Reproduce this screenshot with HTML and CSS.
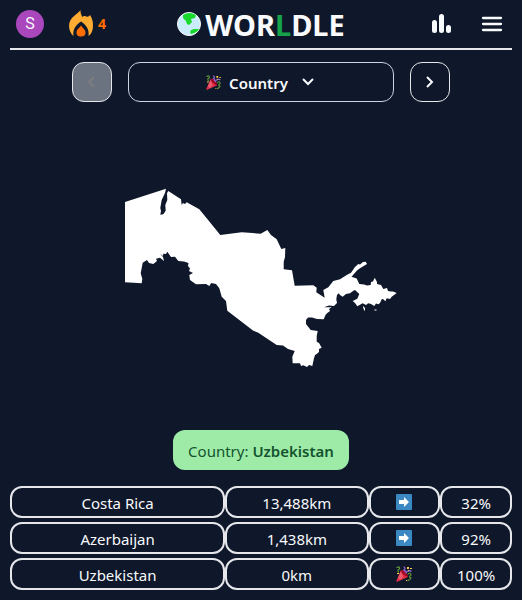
FILE: index.html
```html
<!DOCTYPE html>
<html lang="en">
<head>
<meta charset="utf-8">
<meta name="viewport" content="width=device-width, initial-scale=1">
<title>Worldle</title>
<link rel="stylesheet" href="styles.css">
</head>
<body>
<svg class="defs" aria-hidden="true">
  <symbol id="party" viewBox="0 0 16 16">
    <path fill="#dd2e44" d="M5 4 0.3 14.8Q0 16 1.3 15.7L12 11Q10 6 5 4Z"/>
    <path fill="#ea596e" d="M5 5 2 12 4 14 7 11Z"/>
    <path fill="#a0041e" d="M5 4Q9 4 11 8 12 10 12 11 9 10 7 8 5 6 5 4Z"/>
    <g fill="none" stroke-width="1.3" stroke-linecap="round">
      <path stroke="#5c913b" d="M1 1.5Q4 0 3.5 3 1 4 2.5 6M12 8Q15 6 15 9 12 11 15 12 14 14 12 14.500"/>
      <path stroke="#9266cc" d="M8 1Q10 2 8 4 10 4 9 6M10 7Q11 4 15 5"/>
    </g>
    <path fill="#ffcc4d" d="M11 1h2v2h-2zM14 2h2v1h-2zM12 4h1v1h-1zM1 7h2v1H1zM10 14h1v1h-1z"/>
  </symbol>
  <symbol id="arrow" viewBox="0 0 16 16">
    <rect width="16" height="16" rx="1" fill="#3b88c3"/>
    <path fill="#fff" d="M3 6h5V3l5 5-5 5v-3H3z"/>
  </symbol>
</svg>
<header class="header">
  <div class="side">
    <button class="avatar" aria-label="Account">S</button>
    <div class="streak">
      <svg width="24" height="28" viewBox="0 0 24 28" aria-hidden="true">
        <path fill="#ffac33" d="M11.500 0C9 4 0 7 0 16c0 4 2 8 4.500 10C3.500 19 7 15 12 11.500c5 3.500 8.500 7.500 7.500 14.500 3-2 4.500-6 4.500-10 0-5-1-8-3-11-1 2-3 2-5 1-1 0-2 0-3 1 0-2-2-4-1.500-7Z"/>
        <path fill="#ff6c00" d="M12 15.500c-2 3-4.500 4-4.500 7s2 4 4.500 4 4.500-1 4.500-4-2.500-4-4.500-7Z"/>
      </svg>
      <span>4</span>
    </div>
  </div>
  <h1 class="title">
    <svg width="24" height="24" viewBox="0 0 24 24" aria-hidden="true">
      <circle cx="12" cy="12" r="11.500" fill="#c9edff" stroke="#f8fafc"/>
      <path fill="#18d92c" d="M6 3Q12-1 19 3l-1 3-4 1 1 3-3 3-2-1-1-3-3-3ZM14 18l3-1h5q-2 4-8 5l-1-2Z"/>
    </svg>
    <span>WOR<span class="green">L</span>DLE</span>
  </h1>
  <div class="side end">
    <button class="icon" aria-label="Statistics">
      <svg width="20" height="20" viewBox="0 0 20 20" fill="currentColor" aria-hidden="true"><rect y="6" width="5" height="13" rx="2.500"/><rect x="7" width="5" height="19" rx="2.500"/><rect x="14" y="11" width="5" height="8" rx="2.500"/></svg>
    </button>
    <button class="icon" aria-label="Menu">
      <svg width="22" height="16" viewBox="0 0 22 16" stroke="currentColor" stroke-width="2.300" stroke-linecap="round" aria-hidden="true"><path d="M2 2h18M2 8h18M2 14h18"/></svg>
    </button>
  </div>
</header>
<main>
  <nav class="rounds" aria-label="Rounds">
    <button class="step" aria-label="Previous round" disabled>
      <svg class="line" width="16" height="16" viewBox="0 0 16 16" aria-hidden="true"><path d="m10 3-5 5 5 5"/></svg>
    </button>
    <button class="picker">
      <svg width="15" height="15" aria-hidden="true"><use href="#party"/></svg>
      <span>Country</span>
      <svg class="line chevron" width="16" height="16" viewBox="0 0 16 16" aria-hidden="true"><path d="m3 5 5 5 5-5"/></svg>
    </button>
    <button class="step" aria-label="Next round">
      <svg class="line" width="16" height="16" viewBox="0 0 16 16" aria-hidden="true"><path d="m5 3 5 5-5 5"/></svg>
    </button>
  </nav>
  <div class="map">
    <svg width="274" height="180" viewBox="124 188 274 180" fill="#fff" role="img" aria-label="Country outline">
      <path d="M125 202 166 188.700 165 193 161.700 200 160.300 208 161 211 160.300 214.700 163.300 214.300 165.700 210.700 165.300 205 167.300 200 167 193.300 168.300 191 181 199.300 181.700 205 183 203 185 204 186.700 202.300 199.300 209.300 206.700 218.300 220.300 235 241.700 232.300 260.700 233.700 267.300 230 271 235 276.700 239.300 281.300 249 285.300 248 285 257.300 283.700 261.700 283.700 269.300 292 270.300 294.700 285.700 313.300 285.300 316.700 287.700 316.300 292.300 324.700 297.700 324 294 323.300 290 328.300 287.300 333.300 281 340 279.300 346.700 275 351 272.700 355 267 358.300 264 360 264.500 363 262 365.700 261.700 367 264 360 268.300 357 270.500 351.500 276.700 356.700 278.500 359.300 284 364 284.500 367 285.500 370.700 285 371 282 373 281.500 374.700 277.700 377 282 377 284 381 285 383.300 289 387 288 388 291 391 291.500 393 291.500 396.700 293 391.700 296.700 390 299 386.700 298.300 385.300 301.300 383 299 381.700 299.300 380 303 378.300 304.300 376 303.500 374.300 306 371 304 368.300 303.300 366 305 362.700 303.300 357.300 306.300 355 303 352.700 301 357.300 298.700 359.300 294 355 290 353 291 350 293.300 346 294 342.700 296.700 340 295 338.700 293.300 337 295 336.300 299.300 337 303 334 306 329 305.500 324 307.300 331.700 307.300 329 309 330 311 327 313.300 325.500 315 323.700 319.300 317 319 312 317.500 308 317.500 306 320 306 324 310.700 330 317.700 331 316.700 336 316.700 341.700 319 343 321.700 347.700 319 349 319 352 316.700 354 315 355 314 358.300 312.300 366 309 365 307 367 303.300 365.300 301 366 300 363.300 292.700 363.300 292.300 356.700 294.700 351 288 349 283 345.500 276.700 345 258.300 332.700 253.300 330.700 227.300 310.700 226 301 221.700 296.700 219.300 288.300 216 284 211.300 283 209.300 286 206 284 196 284.300 190 280 189.300 275 193 273 189 271 190 268.500 188 266 188.500 263 184 261.500 178.300 261 175 256.700 171 257 167.300 251.700 166 254 163.300 253.700 163 256 160 253.700 163 257 164 261 160 257.700 156 258.700 157 261 153.300 264 149 263 147 260 142.700 262.700 140.700 273.300 142.300 279 141.700 283.300 125 282.300Z"/>
      <path d="m363 306 2 2v3l-1-1-1-3ZM374.500 309.500h2v1h-2Z"/>
    </svg>
  </div>
  <p class="answer">Country: <strong>Uzbekistan</strong></p>
  <table class="guesses" aria-label="Guesses">
    <tbody>
      <tr><td>Costa Rica</td><td>13,488km</td><td><svg width="16" height="16" role="img" aria-label="East"><use href="#arrow"/></svg></td><td>32%</td></tr>
      <tr><td>Azerbaijan</td><td>1,438km</td><td><svg width="16" height="16" role="img" aria-label="East"><use href="#arrow"/></svg></td><td>92%</td></tr>
      <tr><td>Uzbekistan</td><td>0km</td><td><svg width="16" height="16" role="img" aria-label="Correct"><use href="#party"/></svg></td><td>100%</td></tr>
    </tbody>
  </table>
</main>
</body>
</html>
```
FILE: styles.css
```css
* { box-sizing: border-box; }

body {
  margin: 0;
  padding: 0 10px 10px;
  background: #0f172a;
  color: #f8fafc;
  font: 15px/24px "Noto Sans", sans-serif;
}

button {
  padding: 0;
  border: 0;
  background: none;
  color: inherit;
  font: inherit;
}

svg { display: block; }

.defs {
  position: absolute;
  width: 0;
  height: 0;
}

.header {
  display: grid;
  grid-template-columns: 1fr auto 1fr;
  align-items: center;
  height: 50px;
  border-bottom: 2px solid #e5e7eb;
}

.side {
  display: flex;
  align-items: center;
  gap: 25px;
  padding: 0 6px;
}

.end {
  justify-content: flex-end;
  gap: 29px;
  padding: 0 9px;
}

.avatar {
  width: 28px;
  height: 28px;
  border-radius: 50%;
  background: #ab47bc;
  font: 16px/28px Roboto, sans-serif;
}

.streak {
  display: flex;
  align-items: center;
  gap: 5px;
  color: #ff6c00;
  font-size: 14px;
  font-weight: 700;
}

.title {
  display: flex;
  align-items: center;
  gap: 4px;
  margin: 0;
  font-size: 29px;
  line-height: 44px;
  font-weight: 700;
}

.title > span { padding-top: 2px; }

.green { color: #16a34a; }

.rounds {
  display: flex;
  justify-content: center;
  gap: 16px;
  margin-top: 12px;
}

.line {
  fill: none;
  stroke: currentColor;
  stroke-width: 2;
}

.step,
.picker {
  display: flex;
  align-items: center;
  justify-content: center;
  height: 40px;
  border: 1px solid #e5e7eb;
  border-radius: 12px;
}

.step { width: 40px; }

.step:disabled {
  background: #6b7280;
  color: #7d7d7d;
}

.picker {
  flex: 0 1 266px;
  gap: 8px;
  border-color: #cbd5e1;
  font-weight: 600;
}

.picker span { padding-top: 2px; }

.chevron { margin-left: 4px; }

.map {
  display: flex;
  align-items: center;
  justify-content: center;
  height: 328px;
  padding-top: 24px;
}

.answer {
  width: fit-content;
  margin: 0 auto 16px;
  padding: 11px 15px 9px;
  border-radius: 12px;
  background: #9eeba8;
  color: #14532d;
  line-height: 20px;
}

.answer strong { font-weight: 600; }

.guesses {
  display: block;
}

.guesses tbody {
  display: grid;
  gap: 4px;
}

.guesses tr {
  display: grid;
  grid-template-columns: 3fr 2fr 1fr 1fr;
}

.guesses td {
  display: flex;
  align-items: center;
  justify-content: center;
  height: 32px;
  padding: 2px 0 0;
  border: 2px solid #e5e7eb;
  border-radius: 12px;
}

.guesses svg { margin-bottom: 2px; }
```
